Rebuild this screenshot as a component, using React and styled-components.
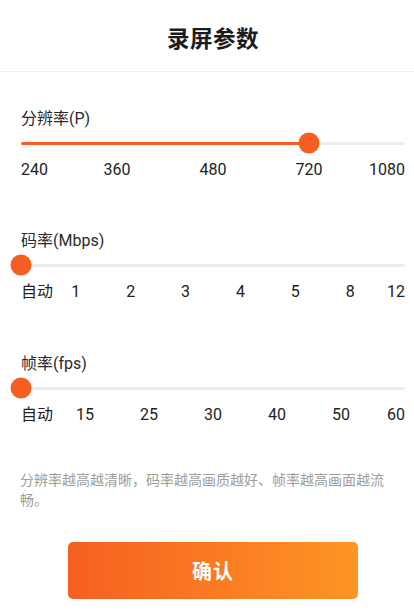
import React from "react";
import styled, { createGlobalStyle } from "styled-components";

const Global = createGlobalStyle`
  html, body { margin: 0; padding: 0; background: #fff; }
  body { font-family: Roboto, "Noto Sans CJK SC", sans-serif; }
  * { box-sizing: border-box; }
`;

const ORANGE = "#f65f21";

const Page = styled.div`
  width: 414px;
  min-height: 614px;
  background: #fff;
  display: flex;
  flex-direction: column;
`;

const Header = styled.header`
  height: 72px;
  border-bottom: 1px solid #eeeeee;
  display: flex;
  align-items: center;
  justify-content: center;
  padding: 2px 9px 0 21px;
`;

const Title = styled.h1`
  margin: 0;
  font-size: 22.5px;
  font-weight: 700;
  color: #1c1c1c;
  font-family: "Noto Sans CJK SC", Roboto, sans-serif;
  letter-spacing: 0.5px;
`;

const Content = styled.main`
  padding: 36px 9px 0 21px;
  display: flex;
  flex-direction: column;
`;

const Section = styled.section`
  display: flex;
  flex-direction: column;
  margin-top: ${(p) => p.$gap || 0}px;
`;

const Label = styled.div`
  font-size: 16px;
  line-height: 22px;
  color: #2a2a2a;
`;

const SliderRow = styled.div`
  position: relative;
  height: 20px;
  margin-top: 3px;
  display: flex;
  align-items: center;
`;

const Track = styled.div`
  position: relative;
  width: 100%;
  height: 3px;
  border-radius: 2px;
  background: #ececec;
`;

const Fill = styled.div`
  height: 100%;
  border-radius: 2px;
  background: ${ORANGE};
`;

const Thumb = styled.div`
  position: absolute;
  top: 50%;
  width: 21px;
  height: 21px;
  border-radius: 50%;
  background: ${ORANGE};
  transform: translate(-50%, -50%);
`;

const Ticks = styled.div`
  position: relative;
  height: 22px;
  margin-top: 6px;
`;

const Tick = styled.span`
  position: absolute;
  top: 0;
  font-size: 16px;
  line-height: 22px;
  color: #222;
  white-space: nowrap;
  transform: translateX(${(p) => (p.$align === "start" ? "0" : p.$align === "end" ? "-100%" : "-50%")});
`;

const Note = styled.p`
  margin: 43px 0 0 -1px;
  font-size: 14px;
  line-height: 20px;
  color: #9d9d9d;
  font-family: "Noto Sans CJK SC", Roboto, sans-serif;
`;

const ButtonRow = styled.div`
  display: flex;
  justify-content: center;
  margin-top: 33px;
`;

const Confirm = styled.button`
  width: 290px;
  height: 57px;
  border: none;
  border-radius: 5px;
  background: linear-gradient(90deg, #f65f21 0%, #fe9524 100%);
  color: #fff;
  font-size: 20px;
  font-weight: 700;
  font-family: "Noto Sans CJK SC", Roboto, sans-serif;
  letter-spacing: 1px;
  cursor: pointer;
`;

function Slider({ label, ticks, value, gap }) {
  const n = ticks.length;
  const positions = ticks.map((t, i) => (t.pos !== undefined ? t.pos : i / (n - 1)));
  const pct = positions[value] * 100;
  return (
    <Section $gap={gap}>
      <Label>{label}</Label>
      <SliderRow>
        <Track>
          <Fill style={{ width: `${pct}%` }} />
          <Thumb style={{ left: `${pct}%` }} />
        </Track>
      </SliderRow>
      <Ticks>
        {ticks.map((t, i) => (
          <Tick
            key={i}
            $align={i === 0 ? "start" : i === n - 1 ? "end" : "center"}
            style={{ left: `${positions[i] * 100}%` }}
          >
            {t.text}
          </Tick>
        ))}
      </Ticks>
    </Section>
  );
}

const resolution = [
  { text: "240", pos: 0 },
  { text: "360", pos: 0.25 },
  { text: "480", pos: 0.5 },
  { text: "720", pos: 0.75 },
  { text: "1080", pos: 1 },
];
const bitrate = ["自动", "1", "2", "3", "4", "5", "8", "12"].map((text) => ({ text }));
const fps = ["自动", "15", "25", "30", "40", "50", "60"].map((text) => ({ text }));

export default function App() {
  return (
    <Page>
      <Global />
      <Header>
        <Title>录屏参数</Title>
      </Header>
      <Content>
        <Slider label="分辨率(P)" ticks={resolution} value={3} />
        <Slider label="码率(Mbps)" ticks={bitrate} value={0} gap={49} />
        <Slider label="帧率(fps)" ticks={fps} value={0} gap={50} />
        <Note>分辨率越高越清晰，码率越高画质越好、帧率越高画面越流畅。</Note>
        <ButtonRow>
          <Confirm>确认</Confirm>
        </ButtonRow>
      </Content>
    </Page>
  );
}
